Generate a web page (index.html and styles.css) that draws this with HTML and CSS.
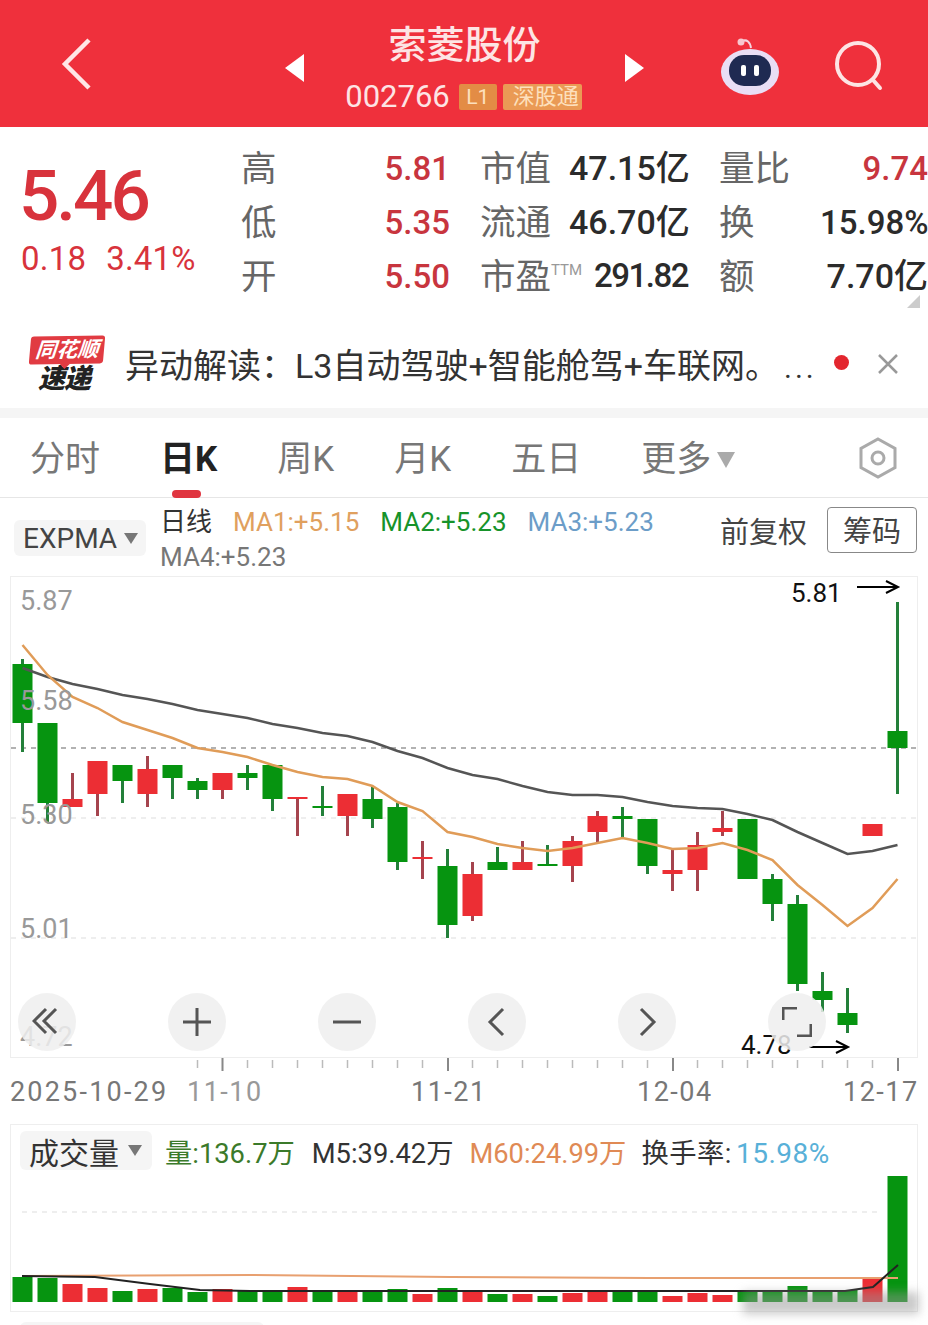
FILE: index.html
```html
<!DOCTYPE html>
<html lang="zh-CN">
<head>
    <meta charset="UTF-8">
    <meta name="viewport" content="width=device-width, initial-scale=1.0">
    <title>索菱股份 002766</title>
    <link rel="stylesheet" href="styles.css">
</head>
<body>
    <header class="topbar">
        <svg class="back-icon" viewBox="0 0 32 54"><path d="M29 3 5 27l24 24"/></svg>
        <svg class="nav-arrow" viewBox="0 0 19 28"><path d="M19 0v28L0 14z"/></svg>
        <div class="stock-title">
            <div class="stock-name">索菱股份</div>
            <div class="stock-code">
                <span>002766</span>
                <span class="badge badge-level">L1</span>
                <span class="badge badge-market">深股通</span>
            </div>
        </div>
        <svg class="nav-arrow" viewBox="0 0 19 28"><path d="M0 0v28l19-14z"/></svg>
        <svg class="robot-icon" viewBox="0 0 58 58">
            <path class="robot-antenna" d="M21 3c5-2 8 1 9 7"/>
            <circle class="robot-ball" cx="20" cy="4" r="3.5"/>
            <ellipse class="robot-head" cx="29" cy="34" rx="29" ry="23"/>
            <rect class="robot-face" x="8" y="17" width="42" height="31" rx="15"/>
            <rect class="robot-eye" x="20" y="27" width="5" height="11" rx="2"/>
            <rect class="robot-eye" x="33" y="27" width="5" height="11" rx="2"/>
        </svg>
        <svg class="search-icon" viewBox="0 0 50 50"><circle cx="23" cy="23" r="21"/><path d="m38 39 7 8"/></svg>
    </header>

    <section class="quote">
        <div class="price-box">
            <div class="price">5.46</div>
            <div class="price-change"><span>0.18</span><span>3.41%</span></div>
        </div>
        <div class="stat-grid">
            <div class="stat-label">高</div><div class="stat-value rise">5.81</div>
            <div class="stat-label mid">市值</div><div class="stat-value">47.15亿</div>
            <div class="stat-label end">量比</div><div class="stat-value rise">9.74</div>

            <div class="stat-label">低</div><div class="stat-value rise">5.35</div>
            <div class="stat-label mid">流通</div><div class="stat-value">46.70亿</div>
            <div class="stat-label end">换</div><div class="stat-value snug">15.98%</div>

            <div class="stat-label">开</div><div class="stat-value rise">5.50</div>
            <div class="stat-label mid">市盈<sup class="ttm">TTM</sup></div><div class="stat-value tight">291.82</div>
            <div class="stat-label end">额</div><div class="stat-value">7.70亿</div>
        </div>
        <span class="corner-mark"></span>
    </section>

    <section class="news">
        <div class="news-logo">
            <div class="logo-flag">同花顺</div>
            <div class="logo-word">速递</div>
        </div>
        <div class="news-text">异动解读：L3自动驾驶+智能舱驾+车联网。<span class="news-more">...</span></div>
        <span class="news-dot"></span>
        <svg class="news-close" viewBox="0 0 20 20"><path d="m1 1 18 18M19 1 1 19"/></svg>
    </section>

    <nav class="tabs">
        <span class="tab">分时</span>
        <span class="tab active">日K</span>
        <span class="tab">周K</span>
        <span class="tab">月K</span>
        <span class="tab">五日</span>
        <span class="tab tab-more">更多<i class="caret"></i></span>
        <svg class="hex-icon" viewBox="0 0 40 42"><path d="M20 2 37 11.500V30.500L20 40 3 30.500V11.500z"/><circle cx="20" cy="21" r="6"/></svg>
    </nav>

    <section class="chart-tools">
        <div class="chip chip-expma">EXPMA<i class="caret small"></i></div>
        <div class="ma-legend">
            <span class="ma-title">日线</span>
            <span class="ma1">MA1:+5.15</span>
            <span class="ma2">MA2:+5.23</span>
            <span class="ma3">MA3:+5.23</span>
            <span class="ma4">MA4:+5.23</span>
        </div>
        <span class="adjust">前复权</span>
        <span class="chips-btn">筹码</span>
    </section>

    <section class="kline">
        <svg class="kline-svg" viewBox="11 577 906 480" width="906" height="480">
            <path class="grid-strong" d="M11 748H917"/>
            <path class="grid-soft" d="M11 818H917M11 938H917"/>

            <path class="wick-green" d="M22.500 659V752 M47.500 803V823 M122.500 781V803 M172.500 778V799 M197.500 778V799 M247.500 765V790
                M272.500 799V811 M322.500 786V816 M372.500 787V828 M397.500 803V870 M447.500 849V938
                M497.500 847V870 M547.500 845V866 M622.500 807V838 M647.500 866V874
                M772.500 874V921 M797.500 895V991 M822.500 972V1012 M847.500 988V1033 M897.500 602V794"/>
            <path class="wick-red" d="M72.500 773V807 M97.500 794V816 M147.500 756V807 M222.500 790V799 M297.500 797V836
                M347.500 816V836 M422.500 841V879 M472.500 862V921 M522.500 841V862 M572.500 836V882
                M597.500 811V843 M672.500 849V891 M697.500 832V891 M722.500 811V836"/>

            <path class="body-green" d="M12.500 664h20V723h-20z M37.500 723h20V803h-20z M112.500 765h20V781h-20z
                M162.500 765h20V778h-20z M187.500 781h20V790h-20z M237.500 773h20V778h-20z M262.500 765h20V799h-20z
                M312.500 806h20V808h-20z M362.500 799h20V819h-20z M387.500 807h20V862h-20z M437.500 866h20V925h-20z
                M487.500 862h20V870h-20z M537.500 864h20V866h-20z M612.500 816h20V819h-20z M637.500 819h20V866h-20z
                M737.500 819h20V879h-20z M762.500 879h20V904h-20z M787.500 904h20V984h-20z M812.500 991h20V1000h-20z
                M837.500 1013h20V1025h-20z M887.500 731h20V748h-20z"/>
            <path class="body-red" d="M62.500 799h20V807h-20z M87.500 761h20V794h-20z M137.500 769h20V794h-20z
                M212.500 773h20V790h-20z M287.500 797h20V799h-20z M337.500 794h20V816h-20z M412.500 857h20V859h-20z
                M462.500 874h20V916h-20z M512.500 862h20V870h-20z M562.500 841h20V866h-20z M587.500 816h20V832h-20z
                M662.500 870h20V874h-20z M687.500 845h20V870h-20z M712.500 828h20V832h-20z M862.500 824h20V836h-20z"/>

            <polyline class="line-gray" points="22.500,668 47.500,677 72.500,684 97.500,689 122.500,695 147.500,699 172.500,704 197.500,710 222.500,714 247.500,718 272.500,724 297.500,728 322.500,733 347.500,736 372.500,742 397.500,751 422.500,758 447.500,768 472.500,775 497.500,779 522.500,786 547.500,792 572.500,795 597.500,795 622.500,797 647.500,802 672.500,806 697.500,808 722.500,809 747.500,814 772.500,820 797.500,832 822.500,843 847.500,854 872.500,851 897.500,845"/>
            <polyline class="line-orange" points="22.500,645 47.500,675 72.500,697 97.500,708 122.500,722 147.500,730 172.500,738 197.500,748 222.500,752 247.500,757 272.500,765 297.500,772 322.500,777 347.500,779 372.500,786 397.500,802 422.500,811 447.500,832 472.500,837 497.500,844 522.500,848 547.500,851 572.500,848 597.500,843 622.500,838 647.500,843 672.500,849 697.500,848 722.500,843 747.500,850 772.500,860 797.500,885 822.500,905 847.500,926 872.500,908 897.500,879"/>

            <text class="axis-price" x="20" y="610">5.87</text>
            <text class="axis-price" x="20" y="710">5.58</text>
            <text class="axis-price" x="20" y="824">5.30</text>
            <text class="axis-price" x="20" y="938">5.01</text>
            <text class="axis-price" x="20" y="1046">4.72</text>

            <text class="mark-text" x="791" y="602">5.81</text>
            <path class="mark-arrow" d="M857 587H897M886 581l12 6-12 6"/>
            <text class="mark-text" x="741" y="1054">4.78</text>
            <path class="mark-arrow" d="M809 1047H847M836 1041l12 6-12 6"/>
        </svg>
        <div class="zoom-bar">
            <span class="zoom-btn"><svg viewBox="0 0 30 30"><path d="M14 2 2 14l12 12M24 2 12 14l12 12"/></svg></span>
            <span class="zoom-btn"><svg viewBox="0 0 30 30"><path d="M15 1v28M1 15h28"/></svg></span>
            <span class="zoom-btn"><svg viewBox="0 0 30 30"><path d="M1 15h28"/></svg></span>
            <span class="zoom-btn"><svg viewBox="0 0 30 30"><path d="M21 2 8 15l13 13"/></svg></span>
            <span class="zoom-btn"><svg viewBox="0 0 30 30"><path d="m9 2 13 13L9 28"/></svg></span>
            <span class="zoom-btn"><svg viewBox="0 0 30 30"><path d="M1 13V1h14M29 17v12H15"/></svg></span>
        </div>
    </section>

    <svg class="time-axis" viewBox="0 1058 928 66" width="928" height="66">
        <path class="tick-minor" d="M197.500 1060v8M247.500 1060v8M272.500 1060v8M297.500 1060v8M322.500 1060v8M347.500 1060v8M372.500 1060v8M397.500 1060v8M422.500 1060v8M472.500 1060v8M497.500 1060v8M522.500 1060v8M547.500 1060v8M572.500 1060v8M597.500 1060v8M622.500 1060v8M647.500 1060v8M697.500 1060v8M722.500 1060v8M747.500 1060v8M772.500 1060v8M797.500 1060v8M822.500 1060v8M847.500 1060v8M872.500 1060v8"/>
        <path class="tick-major" d="M222.500 1058v13M448 1058v13M673 1058v13M898 1058v13"/>
        <text class="time-label time-start" x="10" y="1101">2025-10-29</text>
        <text class="time-label faded" x="187" y="1101">11-10</text>
        <text class="time-label" x="411" y="1101">11-21</text>
        <text class="time-label" x="637" y="1101">12-04</text>
        <text class="time-label" x="843" y="1101">12-17</text>
    </svg>

    <section class="volume">
        <div class="volume-head">
            <div class="chip chip-volume">成交量<i class="caret small"></i></div>
            <span class="vol-now">量:136.7万</span>
            <span class="vol-m5">M5:39.42万</span>
            <span class="vol-m60">M60:24.99万</span>
            <span class="vol-rate">换手率:<em>15.98%</em></span>
        </div>
        <svg class="volume-svg" viewBox="11 1176 906 135" width="906" height="135">
            <path class="grid-soft" d="M22 1212H880"/>
            <path class="body-green" d="M12.500 1277h20V1302h-20z M37.500 1278h20V1302h-20z M112.500 1291h20V1302h-20z
                M162.500 1288h20V1302h-20z M187.500 1292h20V1302h-20z M237.500 1291h20V1302h-20z M262.500 1290h20V1302h-20z
                M312.500 1292h20V1302h-20z M362.500 1291h20V1302h-20z M387.500 1289h20V1302h-20z M437.500 1288h20V1302h-20z
                M487.500 1294h20V1302h-20z M537.500 1296h20V1302h-20z M612.500 1292h20V1302h-20z M637.500 1292h20V1302h-20z
                M737.500 1292h20V1302h-20z M762.500 1291h20V1302h-20z M787.500 1286h20V1302h-20z M812.500 1290h20V1302h-20z
                M837.500 1290h20V1302h-20z M887.500 1176h20V1302h-20z"/>
            <path class="body-red" d="M62.500 1284h20V1302h-20z M87.500 1288h20V1302h-20z M137.500 1289h20V1302h-20z
                M212.500 1289h20V1302h-20z M287.500 1287h20V1302h-20z M337.500 1292h20V1302h-20z M412.500 1294h20V1302h-20z
                M462.500 1292h20V1302h-20z M512.500 1294h20V1302h-20z M562.500 1293h20V1302h-20z M587.500 1292h20V1302h-20z
                M662.500 1296h20V1302h-20z M687.500 1293h20V1302h-20z M712.500 1295h20V1302h-20z M862.500 1279h20V1302h-20z"/>
            <polyline class="line-m60" points="22,1276 250,1275 450,1277 650,1278 898,1278"/>
            <polyline class="line-m5" points="22,1276 95,1277 150,1284 200,1290 250,1291 845,1291 873,1287 898,1265"/>
        </svg>
        <span class="watermark"></span>
    </section>
    <div class="next-chip"></div>
</body>
</html>
```

FILE: styles.css
```css
* {
    box-sizing: border-box;
}

html,
body {
    height: 1325px;
    overflow: hidden;
}

body {
    margin: 0;
    font-family: Roboto, "Noto Sans CJK SC", sans-serif;
    background-color: #fff;
    color: #333;
}

.topbar {
    display: flex;
    align-items: center;
    height: 127px;
    padding-left: 60px;
    background-color: #ef303c;
}

.back-icon {
    width: 32px;
    height: 54px;
    margin-right: 193px;
    fill: none;
    stroke: #ffe6e6;
    stroke-width: 4.5;
}

.nav-arrow {
    width: 19px;
    height: 28px;
    margin-top: 8px;
    fill: #fff;
}

.stock-title {
    align-self: flex-start;
    width: 321px;
    margin-top: 20px;
    text-align: center;
    color: #fde4e4;
}

.stock-name {
    font-size: 38px;
    font-weight: 500;
    line-height: 50px;
}

.stock-code {
    display: flex;
    justify-content: center;
    align-items: center;
    gap: 6px;
    font-size: 31px;
    line-height: 36px;
    margin-top: 9px;
    margin-right: 2px;
}

.stock-code span:first-child {
    margin-right: 3px;
}

.badge {
    height: 26px;
    line-height: 26px;
    font-size: 21px;
    color: #fde0bd;
    padding: 0 5px;
    border-radius: 2px;
}

.badge-level {
    width: 38px;
    background-color: #e38c45;
    text-align: center;
}

.badge-market {
    width: 79px;
    background-color: #ea9a55;
    padding: 0 0 0 7px;
    font-size: 22px;
}

.robot-icon {
    width: 58px;
    height: 58px;
    margin-left: 77px;
    margin-top: 6px;
}

.robot-antenna {
    fill: none;
    stroke: #f5d5e0;
    stroke-width: 2;
}

.robot-ball {
    fill: #f7c7cf;
}

.robot-head {
    fill: #e9def5;
}

.robot-face {
    fill: #1f2a52;
}

.robot-eye {
    fill: #fff;
}

.search-icon {
    width: 50px;
    height: 50px;
    margin-left: 56px;
    margin-top: 4px;
    fill: none;
    stroke: #fde4e4;
    stroke-width: 4;
    stroke-linecap: round;
}

.quote {
    position: relative;
    display: flex;
    height: 203px;
}

.price-box {
    width: 241px;
    padding: 29px 0 0 19px;
    color: #d8333c;
}

.price {
    font-size: 71px;
    font-weight: 500;
    line-height: 80px;
    letter-spacing: -3px;
}

.price-change {
    display: flex;
    gap: 20px;
    font-size: 33px;
    line-height: 42px;
    margin-top: 2px;
    padding-left: 2px;
    letter-spacing: 0.2px;
}

.stat-grid {
    display: grid;
    grid-template-columns: 60px 149px 119px 119px 132px 108px;
    grid-auto-rows: 54px;
    width: 687px;
    padding-top: 14px;
    align-items: center;
    white-space: nowrap;
}

.stat-label {
    font-size: 35.500px;
    color: #666;
    margin-top: -6px;
}

.stat-label.mid {
    padding-left: 30px;
}

.stat-label.end {
    padding-left: 31px;
}

.stat-value {
    font-size: 34px;
    font-weight: 500;
    text-align: right;
    color: #2b2b2b;
    margin-top: -5px;
}

.stat-value.rise {
    font-size: 33px;
    color: #c8353e;
    margin-top: 0;
}

.stat-value.snug {
    font-size: 33px;
    margin: 0 2px 0 0;
}

.stat-value.tight {
    font-size: 33px;
    letter-spacing: -1.500px;
    margin-top: -1px;
}

.ttm {
    font-size: 15px;
    color: #999;
    vertical-align: 14px;
    line-height: 0;
}

.corner-mark {
    position: absolute;
    right: 8px;
    top: 168px;
    width: 0;
    height: 0;
    border-left: 13px solid transparent;
    border-bottom: 13px solid #ccc;
}

.news {
    display: flex;
    align-items: center;
    height: 78px;
    padding: 0 0 12px 30px;
}

.news-logo {
    width: 74px;
    margin-right: 21px;
    margin-top: 4px;
    text-align: center;
}

.logo-flag {
    position: relative;
    height: 28px;
    line-height: 28px;
    background-color: #e13b42;
    color: #fff;
    font-size: 21px;
    font-weight: 700;
    font-style: italic;
    white-space: nowrap;
    border-radius: 3px;
    transform: skewX(-6deg) rotate(-1deg);
}

.logo-flag::after {
    content: "";
    position: absolute;
    left: 31px;
    bottom: -5px;
    border-left: 5px solid transparent;
    border-right: 5px solid transparent;
    border-top: 5px solid #e13b42;
}

.logo-word {
    font-size: 27px;
    font-weight: 900;
    font-style: italic;
    line-height: 30px;
    color: #222;
    letter-spacing: -1px;
    margin-right: 6px;
}

.news-text {
    width: 709px;
    font-size: 34px;
    white-space: nowrap;
    color: #333;
}

.news-more {
    margin-left: 5px;
    letter-spacing: 3px;
    font-size: 30px;
}

.news-dot {
    width: 15px;
    height: 15px;
    border-radius: 50%;
    background-color: #e3262e;
    margin-top: -1px;
}

.news-close {
    width: 20px;
    height: 20px;
    margin-left: 29px;
    margin-top: 2px;
    fill: none;
    stroke: #999;
    stroke-width: 2.500;
}

.tabs {
    display: flex;
    align-items: center;
    gap: 60px;
    height: 90px;
    padding: 0 30px 0 30px;
    border-top: 10px solid #f5f5f5;
    border-bottom: 1px solid #e6e6e6;
    font-size: 35px;
    color: #777;
    white-space: nowrap;
}

.tab {
    position: relative;
    padding-top: 4px;
    line-height: 75px;
}

.tab.active {
    font-weight: 700;
    color: #222;
}

.tab.active::after {
    content: "";
    position: absolute;
    left: 12px;
    bottom: -1px;
    width: 29px;
    height: 8px;
    border-radius: 4px;
    background-color: #e03540;
}

.tab-more {
    display: flex;
    align-items: center;
    gap: 6px;
}

.caret {
    display: inline-block;
    width: 0;
    height: 0;
    border-left: 9px solid transparent;
    border-right: 9px solid transparent;
    border-top: 16px solid #aaa;
}

.caret.small {
    border-left-width: 7px;
    border-right-width: 7px;
    border-top: 11px solid #777;
}

.hex-icon {
    width: 40px;
    height: 42px;
    margin-left: auto;
    fill: none;
    stroke: #aaa;
    stroke-width: 3;
}

.chart-tools {
    display: flex;
    height: 78px;
    padding-left: 14px;
}

.chip {
    display: flex;
    align-items: center;
    background-color: #f5f5f5;
    border-radius: 6px;
}

.chip-expma {
    width: 132px;
    height: 36px;
    margin-top: 22px;
    padding-left: 9px;
    gap: 7px;
    font-size: 28px;
    color: #444;
}

.ma-legend {
    display: flex;
    flex-wrap: wrap;
    align-content: flex-start;
    column-gap: 21px;
    width: 560px;
    margin-left: 14px;
    padding-top: 7px;
    font-size: 26px;
    line-height: 35px;
}

.ma-title {
    color: #333;
}

.ma1 {
    color: #e0a05e;
}

.ma2 {
    color: #17932a;
}

.ma3 {
    color: #6c9dc8;
}

.ma4 {
    width: 100%;
    color: #777;
}

.adjust {
    font-size: 29px;
    line-height: 36px;
    margin-top: 17px;
    color: #444;
}

.chips-btn {
    width: 90px;
    height: 46px;
    margin-top: 9px;
    margin-left: 20px;
    border: 1px solid #888;
    border-radius: 4px;
    font-size: 29px;
    line-height: 48px;
    text-align: center;
    color: #444;
}

.kline {
    position: relative;
    height: 482px;
    margin: 0 10px;
    border: 1px solid #eee;
}

.kline-svg,
.volume-svg,
.time-axis {
    display: block;
}

.grid-strong {
    stroke: #999;
    stroke-width: 1.500;
    stroke-dasharray: 5 5;
}

.grid-soft {
    stroke: #ddd;
    stroke-width: 1;
    stroke-dasharray: 5 5;
}

.wick-green {
    fill: none;
    stroke: #23803a;
    stroke-width: 3;
}

.wick-red {
    fill: none;
    stroke: #a5444e;
    stroke-width: 3;
}

.body-green {
    fill: #069410;
}

.body-red {
    fill: #ec2e34;
}

.line-gray {
    fill: none;
    stroke: #555;
    stroke-width: 2.500;
}

.line-orange {
    fill: none;
    stroke: #e09c58;
    stroke-width: 2.500;
}

.axis-price {
    font-size: 27px;
    fill: #999;
}

.mark-text {
    font-size: 26px;
    fill: #111;
}

.mark-arrow {
    fill: none;
    stroke: #000;
    stroke-width: 2;
}

.zoom-bar {
    position: absolute;
    left: 7px;
    right: 91px;
    top: 416px;
    display: flex;
    justify-content: space-between;
}

.zoom-btn {
    display: flex;
    align-items: center;
    justify-content: center;
    width: 58px;
    height: 58px;
    border-radius: 50%;
    background-color: rgba(238, 238, 238, 0.85);
}

.zoom-btn svg {
    width: 30px;
    height: 30px;
    fill: none;
    stroke: #555;
    stroke-width: 3;
}

.tick-minor {
    stroke: #bbb;
    stroke-width: 1.500;
}

.tick-major {
    stroke: #888;
    stroke-width: 2;
}

.time-label {
    font-size: 27px;
    fill: #777;
    letter-spacing: 1.500px;
}

.time-label.time-start {
    letter-spacing: 2.200px;
}

.time-label.faded {
    fill: #999;
}

.volume {
    position: relative;
    height: 188px;
    margin: 0 10px;
    border: 1px solid #eee;
}

.volume-head {
    display: flex;
    align-items: center;
    height: 51px;
    padding-left: 9px;
    font-size: 27.300px;
    white-space: nowrap;
}

.chip-volume {
    width: 132px;
    height: 39px;
    padding-left: 9px;
    gap: 9px;
    font-size: 30px;
    color: #333;
    margin-right: 13px;
}

.vol-now {
    color: #3b7a2a;
    margin-right: 17px;
}

.vol-m5 {
    color: #333;
    margin-right: 16px;
}

.vol-m60 {
    color: #e08a55;
    margin-right: 15px;
}

.vol-rate {
    color: #333;
    letter-spacing: 0.5px;
}

.vol-rate em {
    font-style: normal;
    font-size: 28px;
    margin-left: 4px;
    color: #58b0d8;
}

.line-m60 {
    fill: none;
    stroke: #e8a070;
    stroke-width: 2;
}

.line-m5 {
    fill: none;
    stroke: #222;
    stroke-width: 2;
}

.watermark {
    position: absolute;
    left: 732px;
    right: -2px;
    top: 167px;
    height: 22px;
    background-color: rgba(150, 150, 150, 0.5);
    filter: blur(5px);
}

.next-chip {
    width: 244px;
    height: 6px;
    margin: 10px 0 0 20px;
    background-color: #f5f5f5;
    border-radius: 6px 6px 0 0;
}
```
